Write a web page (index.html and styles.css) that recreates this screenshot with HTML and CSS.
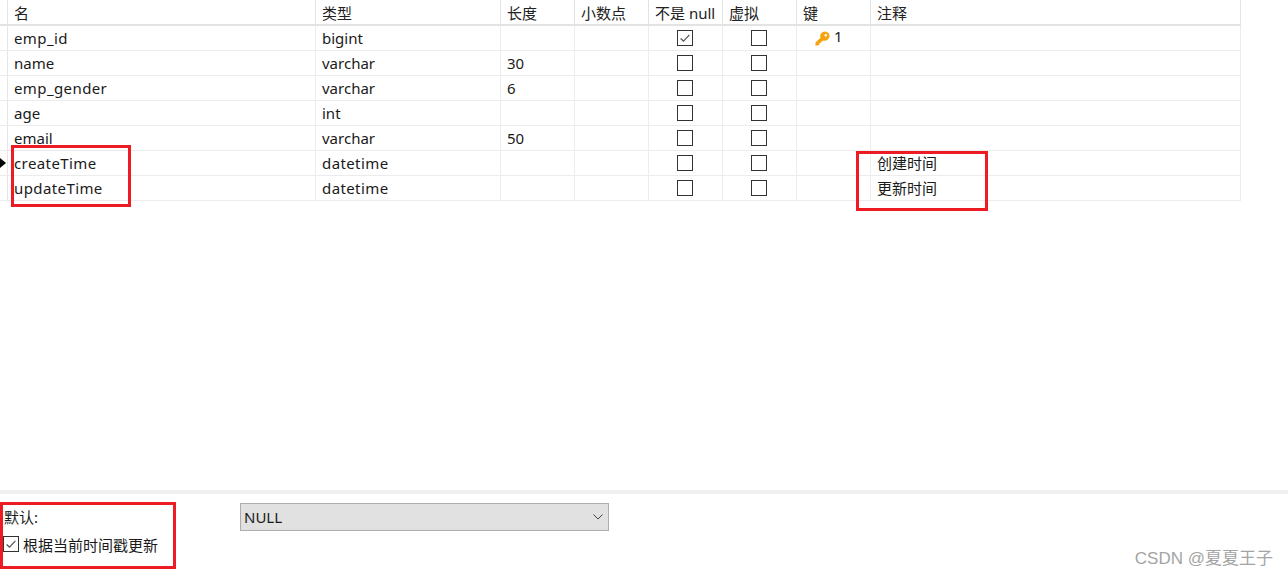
FILE: index.html
```html
<!DOCTYPE html>
<html lang="zh">
<head>
<meta charset="utf-8">
<title>表设计</title>
<link rel="stylesheet" href="styles.css">
</head>
<body>
<div class="app">
  <div class="table">
    <div class="row head">
      <div class="gutter"></div><div class="cell">名</div><div class="cell">类型</div><div class="cell">长度</div><div class="cell">小数点</div><div class="cell">不是 null</div><div class="cell">虚拟</div><div class="cell">键</div><div class="cell last">注释</div>
    </div>
    <div class="row">
      <div class="gutter"></div><div class="cell wide">emp_id</div><div class="cell">bigint</div><div class="cell"></div><div class="cell"></div>
      <div class="cell mid"><span class="box"><svg viewBox="0 0 16 16" class="tick"><path d="M3 8.5 6.3 11.5 13 4.5"/></svg></span></div>
      <div class="cell mid"><span class="box"></span></div>
      <div class="cell keycell"><svg class="key" viewBox="0 0 16 16"><path d="M10.6.5a4.9 4.9 0 1 1-1.7 9.5L7.6 11.3H6.3v1.5H4.8v1.5L3.3 15.5H.5v-3.2l5.4-5.2A4.9 4.9 0 0 1 10.6.5z"/><circle class="hole" cx="11.5" cy="4.6" r="1.3"/></svg><span class="keynum">1</span></div>
      <div class="cell last"></div>
    </div>
    <div class="row">
      <div class="gutter"></div><div class="cell">name</div><div class="cell">varchar</div><div class="cell">30</div><div class="cell"></div>
      <div class="cell mid"><span class="box"></span></div><div class="cell mid"><span class="box"></span></div><div class="cell"></div><div class="cell last"></div>
    </div>
    <div class="row">
      <div class="gutter"></div><div class="cell wide">emp_gender</div><div class="cell">varchar</div><div class="cell">6</div><div class="cell"></div>
      <div class="cell mid"><span class="box"></span></div><div class="cell mid"><span class="box"></span></div><div class="cell"></div><div class="cell last"></div>
    </div>
    <div class="row">
      <div class="gutter"></div><div class="cell">age</div><div class="cell">int</div><div class="cell"></div><div class="cell"></div>
      <div class="cell mid"><span class="box"></span></div><div class="cell mid"><span class="box"></span></div><div class="cell"></div><div class="cell last"></div>
    </div>
    <div class="row">
      <div class="gutter"></div><div class="cell">email</div><div class="cell">varchar</div><div class="cell">50</div><div class="cell"></div>
      <div class="cell mid"><span class="box"></span></div><div class="cell mid"><span class="box"></span></div><div class="cell"></div><div class="cell last"></div>
    </div>
    <div class="row">
      <div class="gutter current"><svg class="arrow" viewBox="0 0 6 10"><path d="M0 0 6 5 0 10z"/></svg></div><div class="cell wide">createTime</div><div class="cell wide">datetime</div><div class="cell"></div><div class="cell"></div>
      <div class="cell mid"><span class="box"></span></div><div class="cell mid"><span class="box"></span></div><div class="cell"></div><div class="cell last comment">创建时间</div>
    </div>
    <div class="row">
      <div class="gutter"></div><div class="cell wide">updateTime</div><div class="cell wide">datetime</div><div class="cell"></div><div class="cell"></div>
      <div class="cell mid"><span class="box"></span></div><div class="cell mid"><span class="box"></span></div><div class="cell"></div><div class="cell last comment">更新时间</div>
    </div>
  </div>

  <div class="options">
    <div class="option-row">
      <span class="label">默认:</span>
      <div class="select"><span>NULL</span><svg class="chevron" viewBox="0 0 10 6"><path d="M.5.5 5 5 9.5.5"/></svg></div>
    </div>
    <div class="check-row">
      <span class="box small"><svg viewBox="0 0 16 16" class="tick"><path d="M3 8.5 6.3 11.5 13 4.5"/></svg></span>
      <span>根据当前时间戳更新</span>
    </div>
  </div>

  <div class="mark mark-names"></div>
  <div class="mark mark-comments"></div>
  <div class="mark mark-default"></div>
  <div class="watermark">CSDN @夏夏王子</div>
</div>
</body>
</html>
```

FILE: styles.css
```css
* { box-sizing: border-box; }
html, body { margin: 0; padding: 0; background: #fff; }
body {
  font-family: "Noto Sans", "Noto Sans CJK SC", sans-serif;
  font-size: 15px;
  color: #1a1a1a;
}
.app {
  position: relative;
  width: 1288px;
  height: 576px;
  overflow: hidden;
  display: flex;
  flex-direction: column;
}
.table { width: 1241px; flex: none; }
.row {
  display: grid;
  grid-template-columns: 8px 308px 185px 74px 74px 74px 74px 74px 370px;
  height: 25px;
  border-bottom: 1px solid #ececec;
}
.row.head { height: 26px; border-bottom: 2px solid #e3e3e3; }
.row.head .cell { color: #222; border-right-color: #e3e3e3; }
.gutter { border-right: 1px solid #e6e6e6; display: flex; align-items: center; }
.cell {
  display: flex;
  align-items: center;
  padding-left: 6px;
  border-right: 1px solid #ececec;
  white-space: nowrap;
  overflow: hidden;
}
.cell.wide { letter-spacing: 0.4px; }
.cell.last { border-right: 1px solid #ececec; }
.cell.comment { padding-bottom: 2px; }
.cell.mid { justify-content: center; padding-left: 0; }
.box {
  width: 16px;
  height: 16px;
  border: 1px solid #333;
  background: #fff;
  display: block;
  flex: none;
  position: relative;
  left: -1px;
}
.tick { display: block; width: 14px; height: 14px; }
.tick path { fill: none; stroke: #555; stroke-width: 1.4; }
.keycell { padding-left: 18px; gap: 4px; }
.key { width: 15px; height: 15px; flex: none; margin-top: 1px; }
.key path { fill: #f5a40f; }
.key .hole { fill: #fff; }
.keynum { position: relative; top: -2px; }
.arrow { width: 6px; height: 10px; }
.arrow path { fill: #000; }

.options {
  margin-top: 289px;
  border-top: 4px solid #f0f0f0;
  padding: 9px 0 0 4px;
  display: flex;
  flex-direction: column;
}
.option-row { display: flex; align-items: center; height: 28px; }
.label { width: 236px; flex: none; padding-bottom: 2px; }
.select {
  width: 369px;
  height: 28px;
  background: #e1e1e1;
  border: 1px solid #adadad;
  padding: 0 3px;
  display: flex;
  align-items: center;
  justify-content: space-between;
}
.chevron { width: 10px; height: 6px; margin-right: 2px; }
.chevron path { fill: none; stroke: #444; stroke-width: 1; }
.check-row {
  display: flex;
  align-items: center;
  gap: 4px;
  height: 28px;
  margin-top: -1px;
  margin-left: -1px;
}
.box.small { left: 0; }

.mark { position: absolute; border: 3px solid #ed1c24; }
.mark-names { left: 11px; top: 145px; width: 120px; height: 62px; }
.mark-comments { left: 856px; top: 151px; width: 132px; height: 60px; }
.mark-default { left: 0; top: 502px; width: 176px; height: 67px; }
.watermark {
  position: absolute;
  right: 15px;
  top: 544px;
  font-size: 17px;
  color: #a4a4a4;
  white-space: nowrap;
  font-family: "Liberation Sans", "Noto Sans CJK SC", sans-serif;
}
```
